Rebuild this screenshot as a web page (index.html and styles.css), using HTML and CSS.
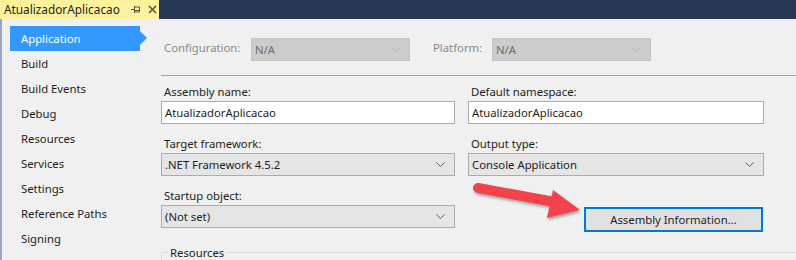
FILE: index.html
```html
<!DOCTYPE html>
<html lang="en">
<head>
  <meta charset="UTF-8" />
  <title>AtualizadorAplicacao</title>
  <link rel="stylesheet" href="styles.css">
</head>
<body>
  <div class="tab-strip">
    <div class="doc-tab">
      <span class="doc-title">AtualizadorAplicacao</span>
      <svg class="pin" width="9" height="7" viewBox="0 0 9 7">
        <path d="M0 3.5h3M3.5 0v7M3.5 1h5v5h-5M3.5 4.5h5" fill="none" stroke="#5a5538" stroke-width="1"/>
      </svg>
      <svg class="close" width="9" height="9" viewBox="0 0 9 9">
        <path d="M1 1l7 7M8 1l-7 7" stroke="#5a5538" stroke-width="1.6"/>
      </svg>
    </div>
  </div>

  <div class="designer">
    <ul class="nav">
      <li class="active">Application</li>
      <li>Build</li>
      <li>Build Events</li>
      <li>Debug</li>
      <li>Resources</li>
      <li>Services</li>
      <li>Settings</li>
      <li>Reference Paths</li>
      <li>Signing</li>
      <li>Security</li>
    </ul>

    <div class="page">
      <div class="config-row">
        <span class="muted-label">Configuration:</span>
        <div class="select disabled config-select">
          <span>N/A</span>
          <svg class="chev" width="9" height="5" viewBox="0 0 9 5"><path d="M0.5 0.5l4 4 4-4" fill="none" stroke="#b4b4b4"/></svg>
        </div>
        <span class="muted-label platform-label">Platform:</span>
        <div class="select disabled config-select">
          <span>N/A</span>
          <svg class="chev" width="9" height="5" viewBox="0 0 9 5"><path d="M0.5 0.5l4 4 4-4" fill="none" stroke="#b4b4b4"/></svg>
        </div>
      </div>

      <div class="form-grid">
        <div class="field">
          <label>Assembly name:</label>
          <div class="textbox">AtualizadorAplicacao</div>
        </div>
        <div class="field">
          <label>Default namespace:</label>
          <div class="textbox">AtualizadorAplicacao</div>
        </div>
        <div class="field">
          <label>Target framework:</label>
          <div class="select">
            <span>.NET Framework 4.5.2</span>
            <svg class="chev" width="9" height="5" viewBox="0 0 9 5"><path d="M0.5 0.5l4 4 4-4" fill="none" stroke="#606060"/></svg>
          </div>
        </div>
        <div class="field">
          <label>Output type:</label>
          <div class="select">
            <span>Console Application</span>
            <svg class="chev" width="9" height="5" viewBox="0 0 9 5"><path d="M0.5 0.5l4 4 4-4" fill="none" stroke="#606060"/></svg>
          </div>
        </div>
        <div class="field">
          <label>Startup object:</label>
          <div class="select">
            <span>(Not set)</span>
            <svg class="chev" width="9" height="5" viewBox="0 0 9 5"><path d="M0.5 0.5l4 4 4-4" fill="none" stroke="#606060"/></svg>
          </div>
        </div>
        <div class="field button-cell">
          <button type="button" class="assembly-btn">Assembly Information...</button>
        </div>
      </div>

      <fieldset class="group">
        <legend>Resources</legend>
      </fieldset>
    </div>
  </div>

  <!-- callout arrow drawn over the form -->
  <svg class="callout" width="130" height="50" viewBox="0 0 130 50">
    <defs>
      <filter id="shadow" x="-20%" y="-40%" width="140%" height="180%">
        <feDropShadow dx="1" dy="2" stdDeviation="1.5" flood-color="#000" flood-opacity="0.35"/>
      </filter>
    </defs>
    <g filter="url(#shadow)" fill="#f2424b">
      <path d="M8 7 L90 22" stroke="#f2424b" stroke-width="10" stroke-linecap="round"/>
      <polygon points="83,9 110,29 77,37"/>
    </g>
  </svg>
</body>
</html>
```

FILE: styles.css
```css
* {
  box-sizing: border-box;
  margin: 0;
  padding: 0;
}

body {
  font-family: 'Noto Sans', 'Open Sans', sans-serif;
  font-size: 11.3px;
  color: #1e1e1e;
  background: #f0f0f0;
  width: 796px;
  height: 260px;
  overflow: hidden;
  position: relative;
}

/* document tab */
.tab-strip {
  height: 19px;
  background: #293955;
  display: flex;
}

.doc-tab {
  width: 159px;
  background: #fff29d;
  display: flex;
  align-items: center;
  padding-left: 4px;
}

.doc-title {
  font-size: 11.8px;
  color: #1e1e1e;
  line-height: 19px;
}

.pin {
  margin-left: 11px;
}

.close {
  margin-left: 8px;
}

/* designer body */
.designer {
  display: flex;
  height: 241px;
  border-left: 2px solid #9aa6c4;
}

.nav {
  list-style: none;
  width: 148px;
  padding: 7px 0 0 8px;
  flex-shrink: 0;
}

.nav li {
  height: 25px;
  line-height: 25px;
  padding-left: 11px;
  width: 130px;
  position: relative;
  white-space: nowrap;
}

.nav li.active {
  background: #3399ff;
  color: #fff;
}

.nav li.active::after {
  content: '';
  position: absolute;
  right: -7px;
  top: 5px;
  border-top: 7px solid transparent;
  border-bottom: 7px solid transparent;
  border-left: 7px solid #3399ff;
}

.page {
  flex: 1;
  padding-left: 11px;
}

.config-row {
  display: flex;
  align-items: center;
  height: 57px;
  border-bottom: 1px solid #a0a0a0;
}

.muted-label {
  color: #8a8a8a;
  padding-left: 3px;
  width: 90px;
}

.platform-label {
  margin-left: 20px;
  width: 62px;
}

.select {
  height: 23px;
  border: 1px solid #acacac;
  background: #e5e5e5;
  display: flex;
  align-items: center;
  justify-content: space-between;
  padding: 0 9px 0 3px;
}

.select.disabled {
  background: #cccccc;
  border-color: #c4c4c4;
  color: #6d6d6d;
}

.config-select {
  width: 159px;
  margin-top: 4px;
}

.chev {
  display: block;
}

.form-grid {
  display: grid;
  grid-template-columns: 294px 296px;
  column-gap: 13px;
  row-gap: 11px;
  padding-top: 7px;
}

.field label {
  display: block;
  height: 17px;
  line-height: 17px;
  padding-left: 3px;
  margin-bottom: 1px;
}

.textbox {
  height: 23px;
  border: 1px solid #acacac;
  background: #fff;
  line-height: 21px;
  padding-left: 3px;
}

.button-cell {
  display: flex;
  justify-content: flex-end;
  align-items: flex-end;
  padding-right: 1px;
}

.assembly-btn {
  width: 179px;
  height: 25px;
  border: 2px solid #0078d7;
  background: #e1e1e1;
  font-family: inherit;
  font-size: 11.3px;
  color: #1e1e1e;
  margin-bottom: -4px;
}

.group {
  margin-top: 17px;
  border: 1px solid #dcdcdc;
  border-right: none;
  height: 40px;
  padding-left: 6px;
}

.group legend {
  padding: 0 2px;
}

.callout {
  position: absolute;
  left: 470px;
  top: 181px;
}
```
